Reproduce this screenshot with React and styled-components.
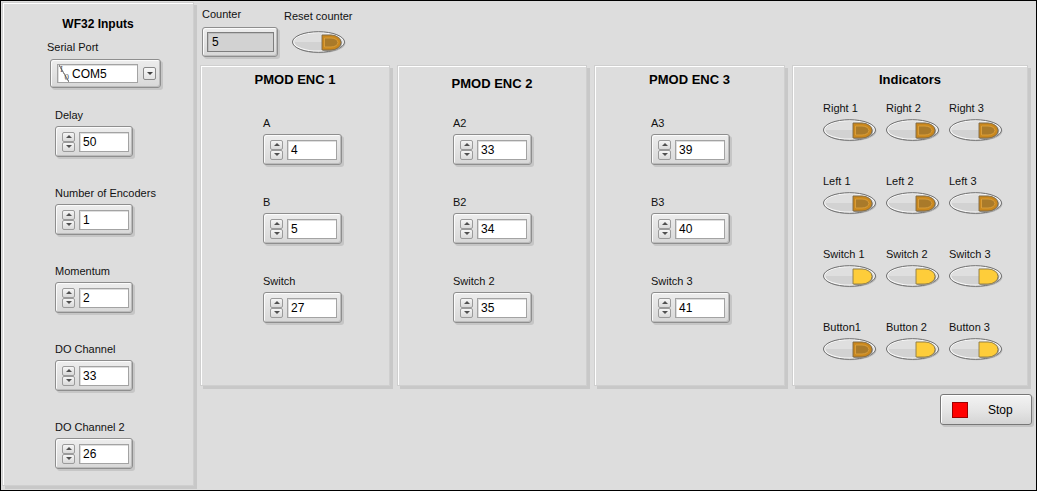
import styled, { createGlobalStyle } from 'styled-components';

const GlobalStyle = createGlobalStyle`
  html, body { margin: 0; padding: 0; background: #dddddd; }
  body { font-family: "Liberation Sans", Arial, sans-serif; color: #111; }
  * { box-sizing: border-box; }
`;

const Window = styled.div`
  width: 1037px;
  height: 491px;
  border: 1px solid #000;
  background: #dddddd;
  display: flex;
  align-items: flex-start;
  padding: 1px 0 0 1px;
  overflow: hidden;
`;

const Panel = styled.section`
  background: #dddddd;
  border: 1px solid #cfcfcf;
  box-shadow: inset 1px 1px 0 #ffffff, 3px 3px 0 #c8c8c8;
`;

const LeftPanel = styled(Panel)`
  width: 192px;
  height: 484px;
  display: flex;
  flex-direction: column;
  padding-top: 13px;
`;

const Title = styled.div`
  font-weight: bold;
  font-size: ${(p) => p.$size || 13}px;
  line-height: 16px;
  text-align: center;
  color: #000;
`;

const Group = styled.div`
  display: flex;
  flex-direction: column;
  align-items: flex-start;
  margin-top: ${(p) => p.$top || 0}px;
  margin-left: ${(p) => p.$left || 0}px;
`;

const Label = styled.div`
  font-size: 11px;
  line-height: 14px;
  height: 14px;
  margin-bottom: ${(p) => p.$gap ?? 4}px;
  white-space: nowrap;
  color: #111;
`;

const Frame = styled.div`
  display: flex;
  align-items: center;
  width: ${(p) => p.$w || 79}px;
  height: ${(p) => p.$h || 31}px;
  padding-left: ${(p) => p.$pad ?? 6}px;
  margin-left: ${(p) => p.$shift || 0}px;
  border: 1px solid #8e8e8e;
  border-radius: 3px;
  background: linear-gradient(#ededed, #d8d8d8);
  box-shadow: inset 1px 1px 0 #fbfbfb, inset -1px -1px 0 #bcbcbc, 2px 2px 0 #c6c6c6;
`;

const Spin = styled.div`
  display: flex;
  flex-direction: column;
  width: 13px;
  height: 20px;
  margin-right: 4px;
`;

const SpinButton = styled.div`
  height: 10px;
  border: 1px solid #9b9b9b;
  border-radius: 2px;
  background: linear-gradient(#f6f6f6, #dadada);
  display: flex;
  align-items: center;
  justify-content: center;

  &::after {
    content: '';
    border-left: 3px solid transparent;
    border-right: 3px solid transparent;
    ${(p) => (p.$down ? 'border-top: 3px solid #505050;' : 'border-bottom: 3px solid #505050;')}
  }
`;

const Field = styled.div`
  width: ${(p) => p.$w || 50}px;
  height: ${(p) => p.$h || 20}px;
  background: ${(p) => (p.$indicator ? '#d2d2d2' : '#ffffff')};
  border: 1px solid ${(p) => (p.$indicator ? '#7e7e7e' : '#a3a3a3')};
  box-shadow: inset 1px 1px 0 ${(p) => (p.$indicator ? '#bdbdbd' : '#dedede')};
  font-size: 12px;
  line-height: 18px;
  padding-left: ${(p) => p.$textPad || 3}px;
  color: #000;
  display: flex;
  align-items: center;
`;

const IoGlyph = styled.span`
  display: flex;
  flex-direction: column;
  justify-content: space-between;
  width: 10px;
  height: 17px;
  margin-right: 3px;
  font-family: "Liberation Serif", serif;
  font-size: 9px;
  line-height: 8px;
  color: #555;
  background: linear-gradient(to top right, transparent 45%, #8a8a8a 48%, #8a8a8a 52%, transparent 55%);
`;

const IoPart = styled.span`
  display: block;
  align-self: ${(p) => (p.$end ? 'flex-end' : 'flex-start')};
  padding: ${(p) => (p.$end ? '0 0 1px 0' : '0 0 0 1px')};
`;

const DropButton = styled.div`
  width: 13px;
  height: 13px;
  margin-left: 5px;
  border: 1px solid #8a8a8a;
  border-radius: 2px;
  background: linear-gradient(#f7f7f7, #e2e2e2);
  display: flex;
  align-items: center;
  justify-content: center;

  &::after {
    content: '';
    border-left: 3px solid transparent;
    border-right: 3px solid transparent;
    border-top: 3px solid #404040;
  }
`;

const RightColumn = styled.div`
  width: 832px;
  margin-left: 6px;
  display: flex;
  flex-direction: column;
`;

const TopRow = styled.div`
  height: 63px;
  display: flex;
  align-items: flex-start;
`;

const PanelsRow = styled.div`
  display: grid;
  grid-template-columns: 190px 190px 191px 236px;
  column-gap: 7px;
  height: 321px;
`;

const PmodPanel = styled(Panel)`
  display: flex;
  flex-direction: column;
`;

const TitleBlock = styled.div`
  height: ${(p) => p.$h}px;
  padding-top: ${(p) => p.$top}px;
`;

const ControlList = styled.div`
  display: flex;
  flex-direction: column;
  gap: 30px;
  padding-left: ${(p) => p.$indent}px;
`;

const LedGrid = styled.div`
  display: grid;
  grid-template-columns: repeat(3, 63px);
  row-gap: 32px;
  padding-left: 30px;
  margin-top: 13px;
`;

const LedSvg = styled.svg`
  display: block;
  margin-left: ${(p) => p.$shift || 0}px;
`;

const StopRow = styled.div`
  display: flex;
  justify-content: flex-end;
  margin-top: 8px;
`;

const StopButton = styled.div`
  width: 92px;
  height: 31px;
  display: flex;
  align-items: center;
  padding-left: 11px;
  border: 1px solid #777;
  border-radius: 3px;
  background: linear-gradient(#f3f3f3 0%, #e6e6e6 50%, #d4d4d4 100%);
  box-shadow: inset 1px 1px 0 #fff, 2px 2px 0 #c4c4c4;
  font-size: 12px;
  color: #000;
`;

const StopSquare = styled.span`
  width: 16px;
  height: 16px;
  background: #ff0000;
  border: 1px solid #9a0000;
  margin-right: 20px;
`;

const Led = ({ on, shift }) => (
  <LedSvg $shift={shift} width="55" height="23" viewBox="0 0 55 23">
    <ellipse cx="27.5" cy="12" rx="26" ry="10.3" fill="#bdbdbd" />
    <ellipse cx="26.5" cy="11" rx="26" ry="10.3" fill="#f6f6f6" stroke="#6c6c6c" />
    <ellipse cx="26.5" cy="11" rx="24.2" ry="8.6" fill="#d2d2d2" />
    <path d="M2.3 11 A24.2 8.6 0 0 1 50.7 11 Z" fill="#dfdfdf" />
    <path d="M30 4 H39 A10 7.5 0 0 1 39 19 H30 Z" fill="#a0a0a0" transform="translate(1 1)" />
    {on ? (
      <path d="M30 4 H39 A10 7.5 0 0 1 39 19 H30 Z" fill="#fecd3a" stroke="#8c7a45" strokeWidth="0.9" />
    ) : (
      <>
        <path d="M30 4 H39 A10 7.5 0 0 1 39 19 H30 Z" fill="#c9871d" stroke="#7d6a48" strokeWidth="0.9" />
        <path d="M32.5 7 H39 A7 4.5 0 0 1 39 16 H32.5 Z" fill="#a97a2a" stroke="#e0a440" strokeWidth="0.8" />
      </>
    )}
  </LedSvg>
);

const Numeric = ({ value, w }) => (
  <Frame $w={w}>
    <Spin>
      <SpinButton />
      <SpinButton $down />
    </Spin>
    <Field>{value}</Field>
  </Frame>
);

const leftControls = [
  ['Delay', 50, 20],
  ['Number of Encoders', 1, 29],
  ['Momentum', 2, 29],
  ['DO Channel', 33, 29],
  ['DO Channel 2', 26, 29],
];

const pmods = [
  { title: 'PMOD ENC 1', top: 6, indent: 62, fields: [['A', 4], ['B', 5], ['Switch', 27]] },
  { title: 'PMOD ENC 2', top: 10, indent: 55, fields: [['A2', 33], ['B2', 34], ['Switch 2', 35]] },
  { title: 'PMOD ENC 3', top: 6, indent: 56, fields: [['A3', 39], ['B3', 40], ['Switch 3', 41]] },
];

const indicators = [
  ['Right 1', false], ['Right 2', false], ['Right 3', false],
  ['Left 1', false], ['Left 2', false], ['Left 3', false],
  ['Switch 1', true], ['Switch 2', true], ['Switch 3', true],
  ['Button1', false], ['Button 2', true], ['Button 3', true],
];

export default function App() {
  return (
    <>
      <GlobalStyle />
      <Window>
        <LeftPanel>
          <Title $size={12}>WF32 Inputs</Title>
          <Group $top={8} $left={44}>
            <Label $gap={5}>Serial Port</Label>
            <Frame $w={111} $h={29} $shift={3}>
              <Field $w={81} $h={19} $textPad={1}>
                <IoGlyph>
                  <IoPart>I</IoPart>
                  <IoPart $end>0</IoPart>
                </IoGlyph>
                COM5
              </Field>
              <DropButton />
            </Frame>
          </Group>
          {leftControls.map(([label, value, top]) => (
            <Group key={label} $top={top} $left={52}>
              <Label>{label}</Label>
              <Numeric value={value} w={78} />
            </Group>
          ))}
        </LeftPanel>

        <RightColumn>
          <TopRow>
            <Group $top={5} $left={2}>
              <Label $gap={6}>Counter</Label>
              <Frame $w={76} $h={30} $pad={4}>
                <Field $w={67} $h={20} $indicator $textPad={4}>5</Field>
              </Frame>
            </Group>
            <Group $top={7} $left={6}>
              <Label $gap={8}>Reset counter</Label>
              <Led on={false} shift={8} />
            </Group>
          </TopRow>

          <PanelsRow>
            {pmods.map((p) => (
              <PmodPanel key={p.title}>
                <TitleBlock $h={50} $top={p.top}>
                  <Title>{p.title}</Title>
                </TitleBlock>
                <ControlList $indent={p.indent}>
                  {p.fields.map(([label, value]) => (
                    <Group key={label}>
                      <Label>{label}</Label>
                      <Numeric value={value} />
                    </Group>
                  ))}
                </ControlList>
              </PmodPanel>
            ))}
            <PmodPanel>
              <TitleBlock $h={22} $top={6}>
                <Title>Indicators</Title>
              </TitleBlock>
              <LedGrid>
                {indicators.map(([label, on]) => (
                  <Group key={label}>
                    <Label>{label}</Label>
                    <Led on={on} />
                  </Group>
                ))}
              </LedGrid>
            </PmodPanel>
          </PanelsRow>

          <StopRow>
            <StopButton>
              <StopSquare />
              Stop
            </StopButton>
          </StopRow>
        </RightColumn>
      </Window>
    </>
  );
}
